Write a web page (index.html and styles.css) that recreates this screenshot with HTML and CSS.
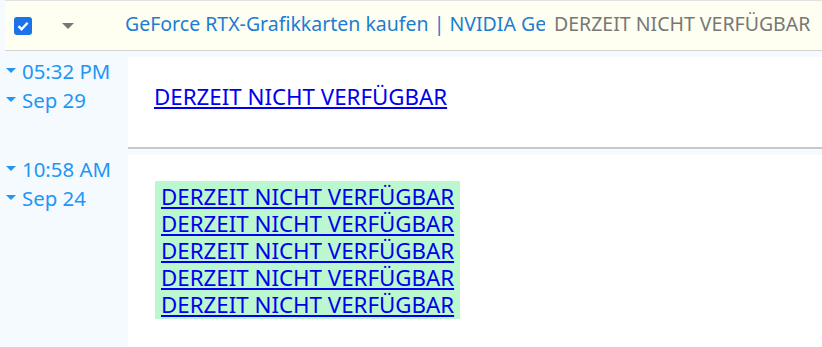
FILE: index.html
```html
<!DOCTYPE html>
<html lang="de">
<head>
  <meta charset="UTF-8">
  <meta name="viewport" content="width=device-width, initial-scale=1.0">
  <title>Watch - GeForce RTX</title>
  <link rel="stylesheet" href="styles.css">
</head>
<body>
  <div class="bar">
    <span class="check">
      <svg width="18" height="18" viewBox="0 0 18 18">
        <rect width="18" height="18" rx="3" fill="#1a73e8"/>
        <path d="M4.5 9.2 L7.6 12.2 L13.6 5.8" fill="none" stroke="#fff" stroke-width="2.4"/>
      </svg>
    </span>
    <span class="caret"></span>
    <a class="title" href="#">GeForce RTX-Grafikkarten kaufen | NVIDIA GeForce</a>
    <span class="status">DERZEIT NICHT VERFÜGBAR</span>
  </div>

  <div class="entry">
    <div class="when">
      <div class="stamp"><span class="tri"></span>05:32 PM</div>
      <div class="stamp"><span class="tri"></span>Sep 29</div>
    </div>
    <div class="diff first">
      <a href="#">DERZEIT NICHT VERFÜGBAR</a>
    </div>
  </div>

  <div class="entry">
    <div class="when">
      <div class="stamp"><span class="tri"></span>10:58 AM</div>
      <div class="stamp"><span class="tri"></span>Sep 24</div>
    </div>
    <div class="diff">
      <div class="added">
        <a href="#">DERZEIT NICHT VERFÜGBAR</a><br>
        <a href="#">DERZEIT NICHT VERFÜGBAR</a><br>
        <a href="#">DERZEIT NICHT VERFÜGBAR</a><br>
        <a href="#">DERZEIT NICHT VERFÜGBAR</a><br>
        <a href="#">DERZEIT NICHT VERFÜGBAR</a>
      </div>
    </div>
  </div>
</body>
</html>
```

FILE: styles.css
```css
body {
  margin: 0;
  background: #f5faff;
  font-family: 'Noto Sans', sans-serif;
  overflow: hidden;
}

.bar {
  display: flex;
  align-items: center;
  height: 49px;
  margin-left: 5px;
  background: #fefff0;
  border-top: 1px solid #e2e2e2;
  border-bottom: 1px solid #d2d2d2;
  font-size: 19.5px;
  white-space: nowrap;
}

.check {
  display: flex;
  margin-left: 9px;
}

.caret {
  width: 0;
  height: 0;
  margin-left: 30px;
  border-left: 6px solid transparent;
  border-right: 6px solid transparent;
  border-top: 6px solid #777;
}

.title {
  max-width: 420px;
  overflow: hidden;
  margin-left: 51px;
  margin-bottom: 4px;
  color: #1c7cd6;
  text-decoration: none;
}

.status {
  margin-left: 9px;
  margin-bottom: 4px;
  color: #777;
}

.entry {
  display: flex;
  margin-top: 6px;
}

.when {
  width: 128px;
  flex-shrink: 0;
  color: #2196f3;
  font-size: 20.4px;
  line-height: 29px;
}

.stamp {
  display: flex;
  align-items: center;
  padding-left: 6px;
}

.tri {
  width: 0;
  height: 0;
  margin-right: 6px;
  margin-bottom: 2px;
  border-left: 5px solid transparent;
  border-right: 5px solid transparent;
  border-top: 5px solid #2196f3;
}

.diff {
  flex: 1;
  background: #fff;
  padding: 26px 26px 37px 26px;
  font-size: 22.3px;
  line-height: 27px;
  min-height: 200px;
}

.diff.first {
  min-height: 0;
  border-bottom: 2px solid #c8c8c8;
}

.diff a {
  color: #0000ee;
}

.added {
  display: inline-block;
  background: #bbf7cf;
  padding: 1.5px 6px;
  margin-left: 1px;
}
```
